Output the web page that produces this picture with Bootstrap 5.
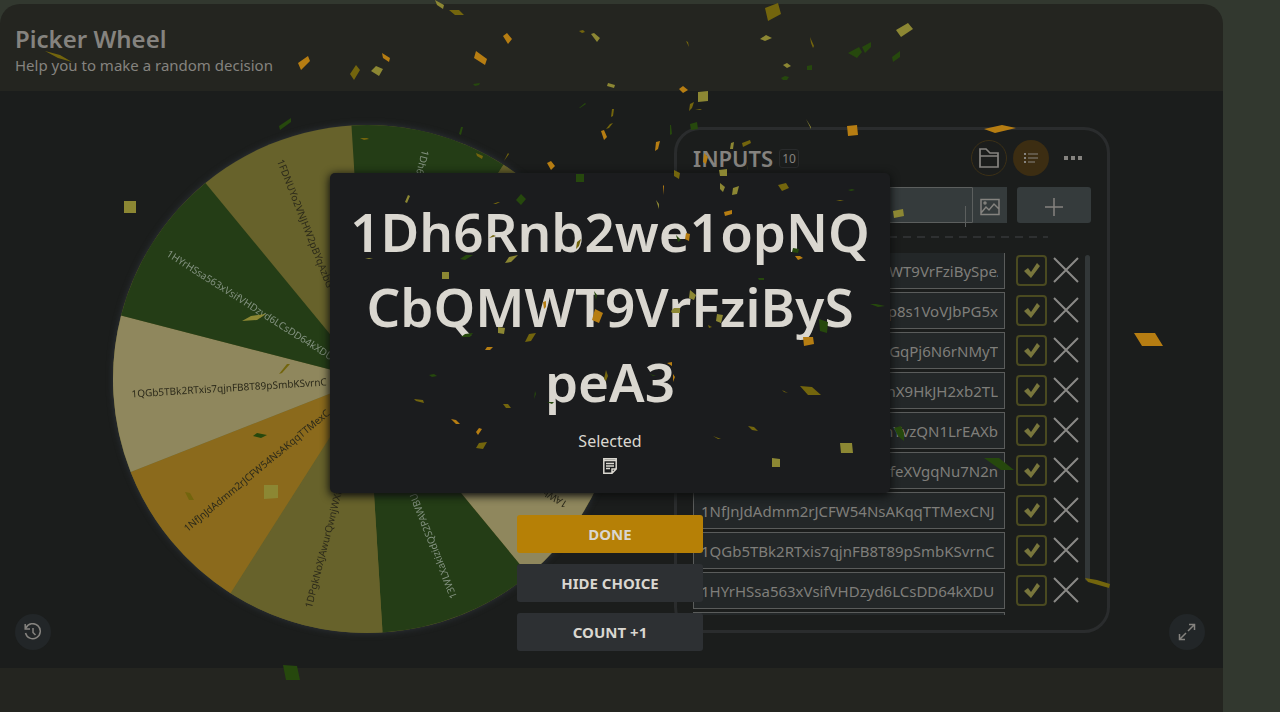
<!DOCTYPE html>
<html lang="en">
<head>
<meta charset="utf-8">
<meta name="viewport" content="width=device-width, initial-scale=1">
<title>Picker Wheel</title>
<link href="https://cdn.jsdelivr.net/npm/bootstrap@5.3.0/dist/css/bootstrap.min.css" rel="stylesheet">
<style>
body{background:#32382f;color:#85837f;font-family:"Noto Sans","Open Sans",sans-serif;font-size:15px;min-height:100vh;overflow:hidden}
.side-rail{flex:0 0 57px}
.picker{background:#242520;border-radius:20px 20px 0 0;margin-top:4px;min-width:0}
.picker-head{height:87px;padding:19px 15px 0}
.picker-head h1{font-size:24px;font-weight:600;line-height:32px;margin:0}
.picker-head p{font-size:15px;line-height:20px;margin:0}
.stage{background:#1b1d1c;height:577px;padding-top:34px;gap:53px}
.wheel{width:508px;height:508px;overflow:visible;filter:drop-shadow(0 0 3px #2e333a)}
.wheel text{font-size:10px;fill:#2c2a1a}
.wheel .on-green{fill:#839280}
.panel{width:436px;height:506px;margin-top:2px;border:3px solid #2a2c2d;border-radius:26px;padding:10px 16px 0}
.panel h2{font-size:22px;font-weight:600;line-height:36px;margin:0}
.count{font-size:12px;line-height:17px;border:1px solid #292b2c;border-radius:3px;padding:0 2px;margin-left:6px}
.round{width:36px;height:36px;border-radius:50%;padding:0;border:1px solid transparent;background:none;color:#85837f;display:flex;align-items:center;justify-content:center}
.header-tools{gap:6px}
.ring{border-color:#3c3016}
.fill{background:#3c2d12}
.dim{background:#222628}
.entry-row{margin-top:11px}
.entry{height:36px;background:#353b3c;border:1px solid #5c5f5e;border-radius:3px 0 0 3px;color:#85837f}
.tool{height:36px;background:#353b3c;border:0;padding:0;color:#85837f}
.tool-img{width:34px}
.tool-add{width:74px;margin-left:10px;border-radius:3px}
.caret-line{position:absolute;right:7px;top:19px;width:1px;height:21px;background:#5c5f5e}
.divider{height:2px;width:355px;margin-top:13px;background:repeating-linear-gradient(90deg,#2e3031 0 8px,transparent 8px 14px)}
.choices{height:362px;margin-top:15px;overflow:hidden;position:relative}
.choice{height:40px}
.choice .name{width:312px;height:37px;margin-top:-1px;background:#232728;border:1px solid #5a5c5b;color:#7f7e7a;padding:0 6px 0 7px;font-size:15px}
.choice .tail{text-align:right}
.tick{appearance:none;width:31px;height:31px;margin:2px 0 0 11px;border:2px solid #4a4a20;border-radius:4px;background:url("data:image/svg+xml,%3Csvg xmlns='http://www.w3.org/2000/svg' viewBox='0 0 27 27'%3E%3Cpath d='M6 14L10 11L13 15L19 6L22 9L13 21Z' fill='%2379763c'/%3E%3C/svg%3E") center/27px no-repeat}
.drop{width:26px;height:26px;margin:4px 0 0 6px;padding:0;border:0;background:none;color:#8a8986;display:flex}
.thumb{position:absolute;right:1px;top:2px;width:5px;height:326px;border-radius:3px;background:#323738}
.corner{position:absolute;bottom:18px}
.corner-start{left:15px}
.corner-end{right:18px}
.overlay-col{position:absolute;inset:0 3px 0 0;padding-top:169px;z-index:2;gap:10px}
.result{width:560px;min-height:320px;background:#1b1c1e;border-radius:5px;box-shadow:0 2px 8px 1px #0d0e0e;padding:21px 20px 0;color:#dad7d0;margin-bottom:12px}
.winner{font-size:53px;font-weight:600;line-height:75px;word-break:break-all;margin:0 0 10px}
.result p{font-size:16px;line-height:24px;margin:0}
.act{width:186px;height:38px;border:0;border-radius:3px;background:#2d3033;color:#dad7d0;font-size:15px;font-weight:700;margin-bottom:1px}
.act-main{background:#b68006}
.confetti{position:absolute;left:0;top:0;width:100%;height:100vh;z-index:5;pointer-events:none}
.o{fill:#b67d12}.k{fill:#73650d}.y{fill:#8c8733}.g{fill:#26480d}
</style>
</head>
<body class="d-flex position-relative">
<main class="picker flex-grow-1 position-relative">
<header class="picker-head">
<h1>Picker Wheel</h1>
<p>Help you to make a random decision</p>
</header>
<section class="stage d-flex justify-content-center align-items-start position-relative">
<svg class="wheel flex-shrink-0" viewBox="-254 -254 508 508" role="img" aria-label="Wheel of choices">
<circle r="254" fill="#67622b"/>
<g id="slices">
<path transform="rotate(-3.5)" fill="#243d16" d="M0 0V-254A254 254 0 0 1 149.3-205.5Z"/>
<path transform="rotate(32.5)" fill="#67622b" d="M0 0V-254A254 254 0 0 1 149.3-205.5Z"/>
<path transform="rotate(68.5)" fill="#8b6a1c" d="M0 0V-254A254 254 0 0 1 149.3-205.5Z"/>
<path transform="rotate(104.5)" fill="#8f875d" d="M0 0V-254A254 254 0 0 1 149.3-205.5Z"/>
<path transform="rotate(140.5)" fill="#243d16" d="M0 0V-254A254 254 0 0 1 149.3-205.5Z"/>
<path transform="rotate(176.5)" fill="#67622b" d="M0 0V-254A254 254 0 0 1 149.3-205.5Z"/>
<path transform="rotate(212.5)" fill="#8b6a1c" d="M0 0V-254A254 254 0 0 1 149.3-205.5Z"/>
<path transform="rotate(248.5)" fill="#8f875d" d="M0 0V-254A254 254 0 0 1 149.3-205.5Z"/>
<path transform="rotate(284.5)" fill="#243d16" d="M0 0V-254A254 254 0 0 1 149.3-205.5Z"/>
</g>
<text class="on-green" transform="rotate(104.5)" x="-236" y="4">1Dh6Rnb2we1opNQCbQMWT9V</text>
<text transform="rotate(212.5)" x="-236" y="4">1AWbR</text>
<text class="on-green" transform="rotate(248.5)" x="-236" y="4">13WLXakizidQS2PAWBU</text>
<text transform="rotate(284.5)" x="-236" y="4">1DPgkNoXJAwurQwnjWXfe</text>
<text transform="rotate(-39.5)" x="-236" y="4">1NfJnJdAdmm2rJCFW54NsAKqqTTMexC</text>
<text transform="rotate(-3.5)" x="-236" y="4">1QGb5TBk2RTxis7qjnFB8T89pSmbKSvrnC</text>
<text class="on-green" transform="rotate(32.5)" x="-236" y="4">1HYrHSsa563xVsifVHDzyd6LCsDD64kXDU</text>
<text transform="rotate(68.5)" x="-236" y="4">1FDNUYo2VNJHW2pBYqAzbG</text>
</svg>
<section class="panel flex-shrink-0">
<div class="d-flex align-items-center">
<h2>INPUTS</h2><span class="count">10</span>
<div class="header-tools d-flex ms-auto">
<button class="round ring" type="button" aria-label="Open file"><svg width="22" height="22" viewBox="0 0 22 22" fill="none" stroke="currentColor" stroke-width="1.7"><path d="M2 20V2H8L12 6H20V20ZM2 9H20"/></svg></button>
<button class="round fill" type="button" aria-label="List view"><svg width="16" height="14" viewBox="0 0 16 14" fill="none" stroke="currentColor" stroke-width="1.2"><path d="M5 3H15M5 7H15M5 11H12"/><path d="M1 3H3M1 7H3M1 11H3" stroke-width="2"/></svg></button>
<button class="round" type="button" aria-label="More"><svg width="20" height="6" viewBox="0 0 20 6" fill="currentColor"><path d="M1 1H5V5H1ZM8 1H12V5H8ZM15 1H19V5H15Z"/></svg></button>
</div>
</div>
<div class="entry-row d-flex">
<div class="flex-grow-1 position-relative"><input class="entry w-100" type="text" aria-label="New choice"><span class="caret-line"></span></div>
<button class="tool tool-img" type="button" aria-label="Add image"><svg width="20" height="18" viewBox="0 0 20 18" fill="none" stroke="currentColor" stroke-width="1.5"><path d="M1 1.5H19V16.500H1ZM1 15L6 9L9 12L14 6L19 11"/><circle cx="5" cy="5" r="1"/></svg></button>
<button class="tool tool-add" type="button" aria-label="Add choice"><svg width="18" height="18" viewBox="0 0 18 18" stroke="currentColor" stroke-width="1.5"><path d="M9 0V18M0 9H18"/></svg></button>
</div>
<div class="divider"></div>
<div class="choices" id="choices">
<div class="thumb"></div>
</div>
</section>
<button class="round dim corner corner-start" type="button" aria-label="History"><svg width="18" height="18" viewBox="0 0 18 18" fill="none" stroke="currentColor" stroke-width="1.500"><path d="M2 5A7.500 7.500 0 1 1 1.500 10M1.200 1V6H6M9 5V9.500L11.500 12"/></svg></button>
<button class="round dim corner corner-end" type="button" aria-label="Full screen"><svg width="18" height="18" viewBox="0 0 18 18" fill="none" stroke="currentColor" stroke-width="1.500"><path d="M11 1.500H16.500V7M16.500 1.500L10 8M7 16.500H1.500V11M1.500 16.500L8 10"/></svg></button>
</section>
<div class="overlay-col d-flex flex-column align-items-center" role="dialog" aria-label="Result">
<div class="result text-center">
<h2 class="winner">1Dh6Rnb2we1opNQCbQMWT9VrFziBySpeA3</h2>
<p>Selected</p>
<svg width="14" height="16" viewBox="0 0 14 16" fill="none" stroke="currentColor" stroke-width="1.500"><path d="M.8.8H13.200V11L9 15.200H.8ZM.8 2.500H13.200M13 11H9V15M3 5.500H11M3 8H11M3 10.500H7"/></svg>
</div>
<button class="act act-main" type="button">DONE</button>
<button class="act" type="button">HIDE CHOICE</button>
<button class="act" type="button">COUNT +1</button>
</div>
</main>
<aside class="side-rail"></aside>
<svg class="confetti" viewBox="0 0 1280 712" preserveAspectRatio="xMinYMin slice" aria-hidden="true">
<path class="o" d="M298 63L308 56 310 61 301 70ZM382 53L390 58 389 62 383 58ZM503 36L507 33 512 39 508 44ZM474 58L476 51 487 59 485 65ZM601 131L604 130 607 137 604 140ZM547 163L551 161 555 166 551 170ZM656 142L660 141 658 149 655 151ZM679 89L683 86 688 90 683 93ZM847 126L857 125 858 135 848 136ZM704 153L708 157 706 164 703 162ZM984 129L1002 125 1016 128 995 133ZM1134 333L1155 333 1163 346 1142 346ZM543 302L546 301 546 307 544 309ZM595 309L603 313 599 323 592 320ZM485 350L487 347 493 347 490 350ZM451 419L456 420 460 424 456 424ZM476 432L479 428 482 429 478 435ZM663 185L664 186 663 195ZM724 212L732 210 732 214 725 216ZM686 233L690 234 689 241 685 239ZM795 256L800 256 803 258 798 260ZM803 337L813 337 814 344 804 346ZM667 363L672 362 672 366ZM673 374L675 377 673 382Z"/>
<path class="k" d="M45 51L60 55 72 62 58 58ZM350 74L356 65 360 70 354 80ZM360 138L367 138 369 139 364 140ZM449 10L459 10 464 15 455 15ZM579 31L583 30 585 32 582 33ZM612 109L614 109 613 116 611 117ZM606 129L610 124 613 123 609 128ZM476 153L483 156 482 159 477 156ZM508 153L509 154 504 161ZM690 104L694 102 692 108 689 111ZM695 109L702 109 700 110ZM686 41L688 42 689 47ZM765 8L778 3 781 14 768 21ZM810 37L814 46 813 48 811 43ZM742 143L750 140 751 143 743 147ZM674 170L680 173 679 179 674 176ZM746 162L748 169 748 170ZM279 374L287 364 290 364 282 373ZM185 492L190 493 194 500 189 500ZM577 242L581 239 579 246 576 249ZM489 238L493 235 496 236 493 237ZM493 204L498 202 500 202 496 204ZM525 342L529 334 536 333 531 341ZM414 399L423 400 424 403 416 401ZM503 404L508 404 511 408 506 408ZM476 448L479 443 487 442 483 449ZM606 370L608 376 606 381 604 379ZM778 185L786 183 789 188 782 191ZM836 200L844 200 840 201ZM708 325L712 327 709 328ZM800 386L812 387 821 395 808 395ZM782 390L788 393 784 392ZM748 426L754 427 758 431 752 430ZM713 436L721 439 718 439ZM1085 578L1097 580 1110 584 1109 588 1088 582Z"/>
<path class="y" d="M371 71L376 66 383 69 379 76ZM435 0L444 5 443 9 437 5ZM591 34L594 33 600 38 597 42ZM608 83L615 85 614 88 607 86ZM698 92L708 91 708 101 698 102ZM760 39L766 35 772 38 765 41ZM783 65L787 63 791 66 787 68ZM806 119L811 127 811 129ZM731 143L734 142 733 149 730 149ZM719 170L727 169 727 176 720 176ZM896 30L908 23 913 29 901 37ZM893 211L903 209 904 216 894 218ZM124 201L136 201 136 213 124 213ZM242 321L251 316 266 314 257 320ZM264 485L278 485 278 498 264 499ZM408 195L410 196 407 203 405 202ZM365 258L373 258 369 259ZM505 263L509 257 518 255 511 262ZM442 272L449 272 449 279 442 279ZM498 327L505 328 504 334 498 333ZM720 183L725 187 723 192 720 189ZM733 188L739 186 737 194 732 195ZM656 200L659 204 659 209ZM690 290L696 295 694 300 689 298ZM671 311L674 308 680 308 680 313 672 313ZM717 314L723 315 721 323 716 321ZM840 443L852 443 853 453 841 453ZM772 458L780 459 780 467 772 467Z"/>
<path class="g" d="M279 126L291 118 291 122 280 130ZM579 108L585 103 586 104 580 108ZM473 84L480 83 479 85 475 86ZM461 127L463 127 461 135 459 134ZM690 124L697 122 698 129 691 130ZM670 125L671 125 672 134 670 135ZM807 66L812 65 812 70 807 70ZM781 78L785 76 789 77 787 80 783 80ZM848 53L859 47 862 52 857 58ZM862 47L871 42 871 47 865 53ZM576 174L584 174 584 182 576 182ZM892 57L900 51 900 57 893 62ZM253 436L257 433 267 435 261 438ZM283 665L297 666 300 680 286 680ZM516 200L521 194 526 199 521 205ZM460 259L466 255 473 255 465 260ZM594 291L597 295 596 300ZM461 337L465 334 473 333 470 337ZM429 375L434 374 437 376 432 377ZM535 391L536 394 534 399ZM547 402L554 402 552 404ZM848 190L852 189 855 190 851 191ZM676 235L681 240 678 242ZM793 248L799 249 798 253 792 252ZM758 278L764 278 764 280 759 280ZM819 319L828 322 827 333 820 331ZM870 304L876 304 885 306 878 307ZM650 374L656 376 653 376ZM894 428L901 426 904 433 904 441 898 436ZM984 458L999 458 1014 470 1001 470Z"/>
</svg>
<script src="https://cdn.jsdelivr.net/npm/bootstrap@5.3.0/dist/js/bootstrap.bundle.min.js"></script>
<script>
const names=["1Dh6Rnb2we1opNQCbQMWT9VrFziBySpeA3","p8s1VoVJbPG5x","pGqPj6N6rNMyT","nX9HkJH2xb2TL","nYvzQN1LrEAXb","feXVgqNu7N2n","1NfJnJdAdmm2rJCFW54NsAKqqTTMexCNJ","1QGb5TBk2RTxis7qjnFB8T89pSmbKSvrnC","1HYrHSsa563xVsifVHDzyd6LCsDD64kXDU",""];
document.getElementById("choices").insertAdjacentHTML("beforeend",names.map((n,i)=>`<div class="choice d-flex align-items-start"><input class="name${i>0&&i<6?" tail":""}" type="text" value="${n}" aria-label="Choice ${i+1}"><input class="tick" type="checkbox" checked aria-label="Include choice ${i+1}"><button class="drop" type="button" aria-label="Remove choice ${i+1}"><svg width="26" height="26" viewBox="0 0 26 26" stroke="currentColor" stroke-width="2"><path d="M1 1L25 25M25 1L1 25"/></svg></button></div>`).join(""));
</script>
</body>
</html>
